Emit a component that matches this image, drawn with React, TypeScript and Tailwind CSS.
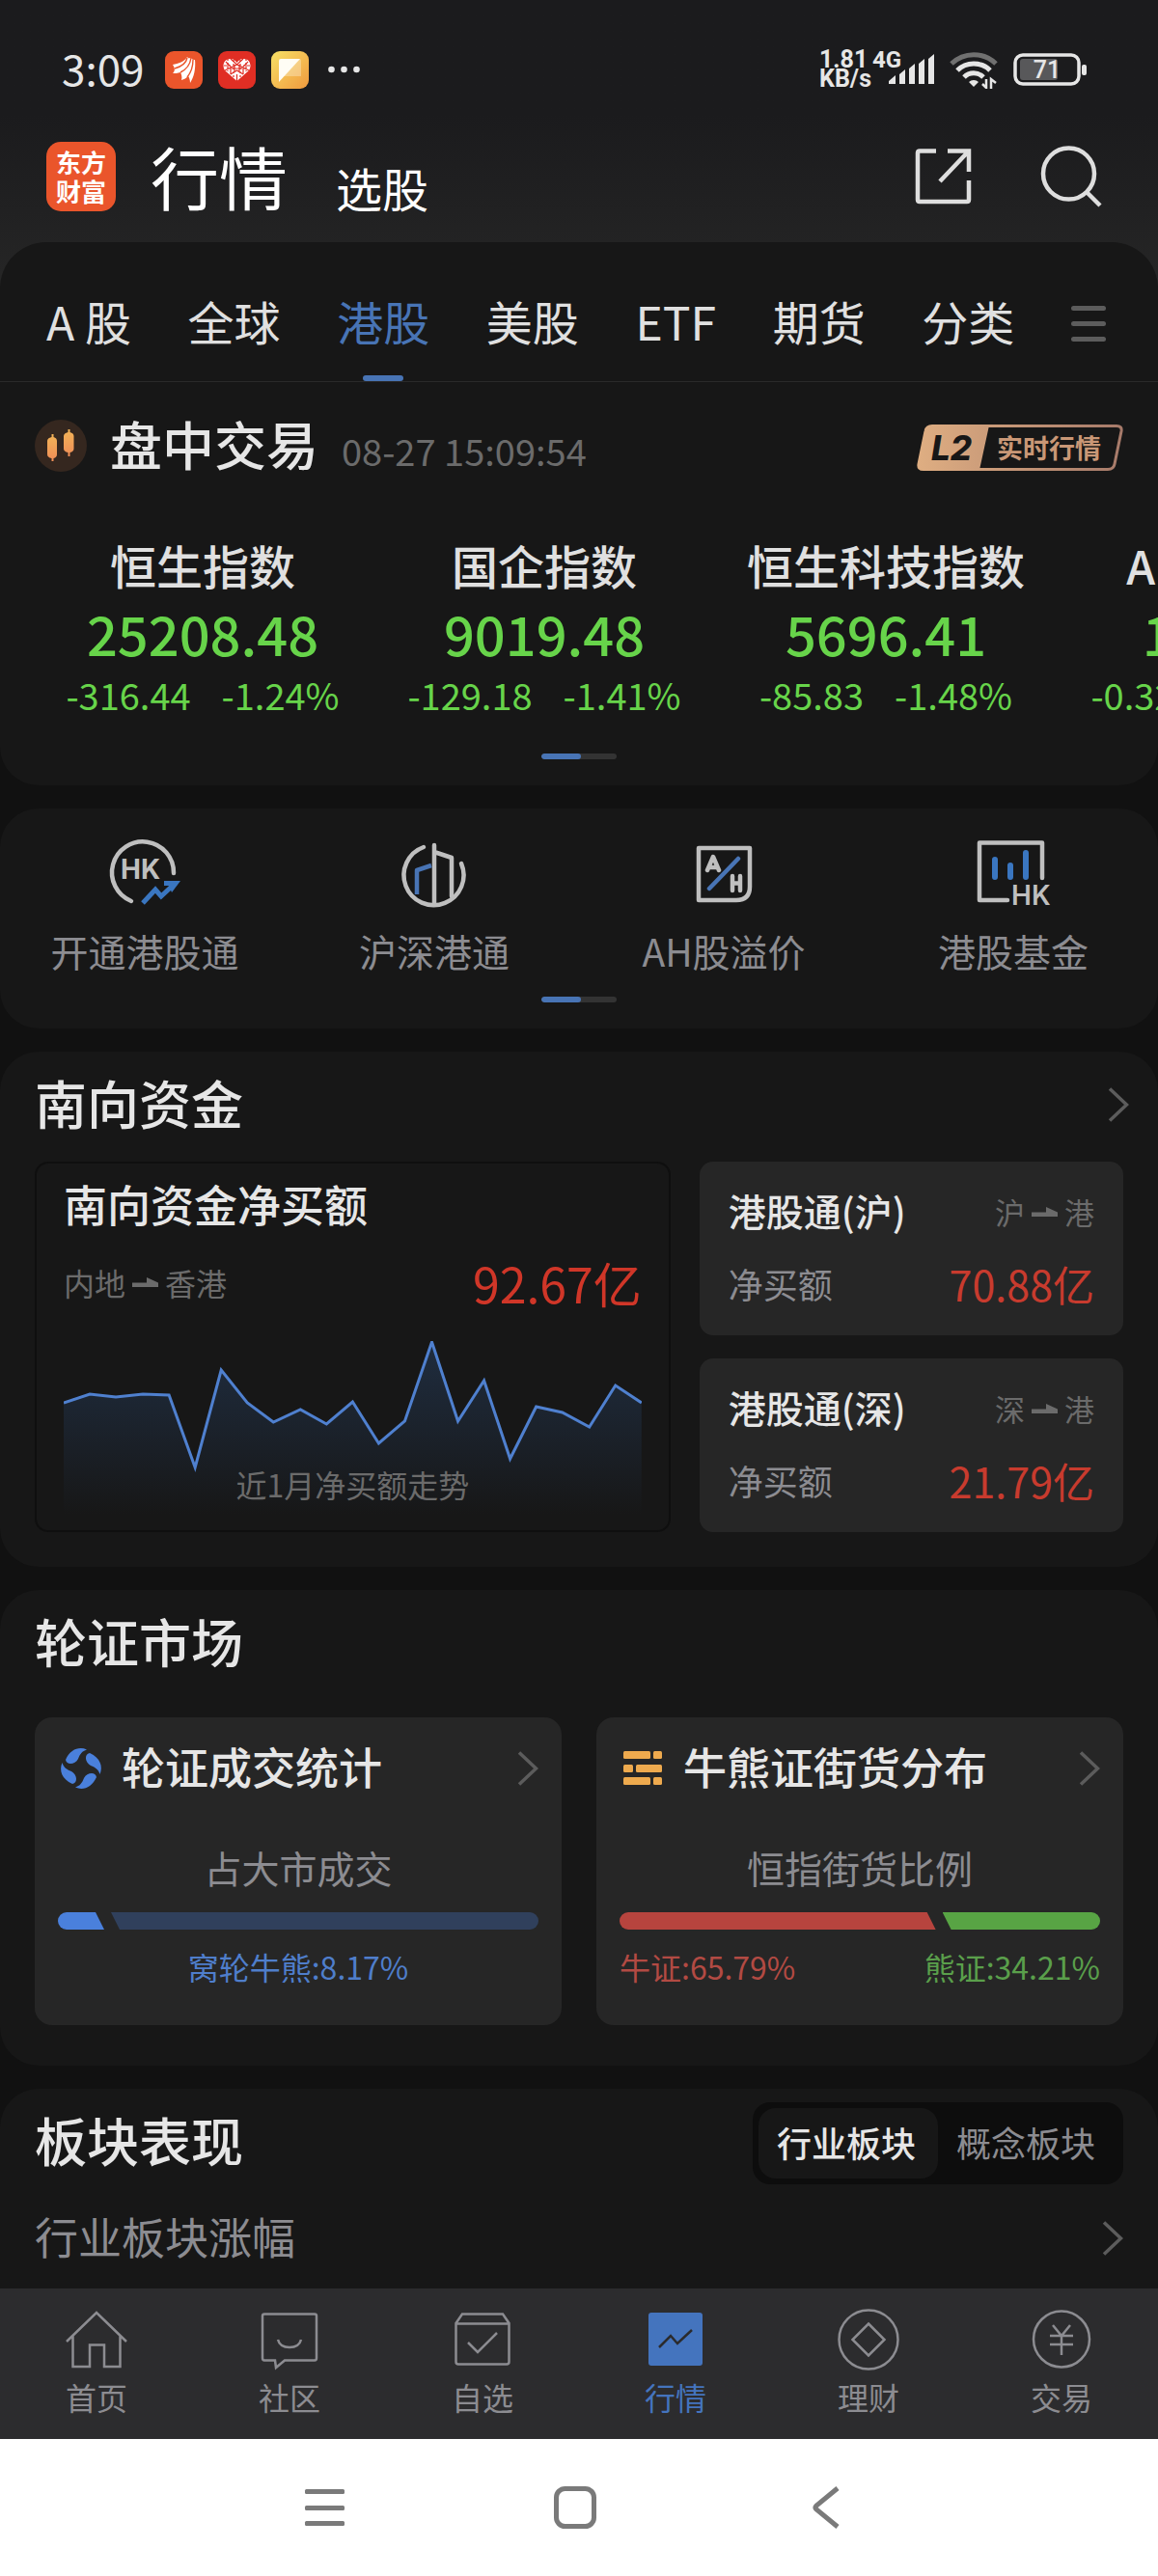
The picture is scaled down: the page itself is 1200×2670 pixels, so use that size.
import React from "react";
import clsx from "clsx";

const tabs = ["A 股", "全球", "港股", "美股", "ETF", "期货", "分类"];

const indices = [
  { name: "恒生指数", value: "25208.48", change: "-316.44", rate: "-1.24%" },
  { name: "国企指数", value: "9019.48", change: "-129.18", rate: "-1.41%" },
  { name: "恒生科技指数", value: "5696.41", change: "-85.83", rate: "-1.48%" },
  { name: "AH股溢价", value: "121.57", change: "-0.3229", rate: "-0.26%" },
];

// daily net inflow of the last month, measured down from the chart top
const trend = [
  64, 55, 58, 55, 56, 131, 30, 64, 84, 71, 86, 63, 106, 83, 1, 83, 41, 122, 68,
  74, 89, 46, 64,
];

const channels = [
  { name: "港股通(沪)", from: "沪", value: "70.88亿" },
  { name: "港股通(深)", from: "深", value: "21.79亿" },
];

function Chevron() {
  return (
    <svg className="w-[22px] h-9 shrink-0" viewBox="0 0 22 36" fill="none" stroke="#5c5c5c" strokeWidth="3.5">
      <path d="M2 1.5 L19.5 18 L2 34.5" />
    </svg>
  );
}

function FlowArrow() {
  return (
    <svg className="w-[27px] h-[10px] shrink-0" viewBox="0 0 27 10" fill="#6b6b6b">
      <path d="M0 5.5 H15 V0 L27 5.5 V10 H0 Z" />
    </svg>
  );
}

function Pager() {
  return (
    <div className="mx-auto w-[78px] h-[6px] rounded-full bg-[#333333] overflow-hidden">
      <div className="w-[41px] h-full rounded-full bg-[#4874b5]" />
    </div>
  );
}

function StatusBar() {
  return (
    <div className="flex items-center justify-between pt-11 pl-16 pr-[72px] text-[#e6e6e6]">
      <div className="flex items-center gap-4 h-14">
        <span className="pb-1 text-[44px] leading-[56px] w-[91px]">3:09</span>
        <svg className="size-[39px]" viewBox="0 0 39 39">
          <rect width="39" height="39" rx="9" fill="#ea552b" />
          <path
            d="M8 14 C14 13 20 11 23 6 C24 8 26 7 27 7 C28 9 30 9 31 9 C32 18 30 27 26 33 C26 30 25 27 24 26 C22 28 20 29 17 30 C18 27 17 24 16 22 C13 23 10 23 8 23 C11 20 10 17 8 14 Z"
            fill="#fff"
          />
          <path d="M27 7 C26 14 22 19 16 22 M29 9 C29 17 27 22 23 27 M23 7 C22 12 17 16 10 18" stroke="#ea552b" strokeWidth="1.4" fill="none" />
        </svg>
        <svg className="size-[39px]" viewBox="0 0 39 39">
          <rect width="39" height="39" rx="9" fill="#e02e24" />
          <path d="M19.5 31 L7 20 C3 13 8 7 13 8 C16 8 18 10 19.5 12 C21 10 23 8 26 8 C31 7 36 13 32 20 Z" fill="#fff" />
          <g stroke="#e02e24" strokeWidth="1.2" fill="none">
            <path d="M13 8 L19.5 14 L26 8 M7 20 L19.5 14 L32 20 M8 11 L13 16 V24 M31 11 L26 16 V24 M19.5 31 V24 M13 24 L19.5 20 L26 24 M6 15 H13 M26 15 H33 M17 14 V22 M22 14 V22 M14 18 H25" />
            <path d="M10 8 L10 21 M29 8 V21 M16 9 V28 M23 9 V28" strokeDasharray="2 2" />
          </g>
        </svg>
        <svg className="size-[39px]" viewBox="0 0 39 39">
          <defs>
            <linearGradient id="note" x1="0" y1="0" x2="1" y2="1">
              <stop offset="0" stopColor="#f7e066" />
              <stop offset="1" stopColor="#f09a3e" />
            </linearGradient>
          </defs>
          <rect width="39" height="39" rx="9" fill="url(#note)" />
          <path d="M10 8 H29 Q31 8 31 10 V26 H13 Z" fill="#fff" opacity=".3" />
          <path d="M8 10 Q8 8 10 8 H30 L8 32 Z" fill="#fffdf5" />
        </svg>
        <svg className="w-[34px] h-2 ml-1" viewBox="0 0 34 8" fill="#e6e6e6">
          <circle cx="3.5" cy="4" r="3.3" />
          <circle cx="16.5" cy="4" r="3.3" />
          <circle cx="29.5" cy="4" r="3.3" />
        </svg>
      </div>

      <div className="flex items-center gap-3">
        <div className="flex items-start font-bold text-[25px] leading-[20px] font-['Roboto','Noto_Sans_CJK_SC',sans-serif]">
          <div className="w-[55px]">
            1.81
            <br />
            KB/s
          </div>
          <svg className="w-[68px] h-[39px]" viewBox="0 0 68 39" fill="#e6e6e6">
            <text x="0" y="18" fontSize="24">4G</text>
            <path d="M17 32 L24 26 V35 H17 Z M28 25 L34 20 V35 H28 Z M38 19 L44 14 V35 H38 Z M48 14 L54 9 V35 H48 Z M58 9 L64 4 V35 H58 Z" />
          </svg>
        </div>
        <svg className="w-[50px] h-[39px]" viewBox="0 0 50 39" fill="none" strokeWidth="5">
          <path d="M2 13 A33 33 0 0 1 48 13" stroke="#707070" />
          <path d="M8 20 A24 24 0 0 1 42 20" stroke="#e6e6e6" />
          <path d="M15 27 A14 14 0 0 1 35 27" stroke="#e6e6e6" />
          <path d="M25 37 L20 32 A7 7 0 0 1 30 32 Z" fill="#e6e6e6" />
          <path d="M38 29 V38 L34 34 M43 39 V29 L48 33" stroke="#e6e6e6" strokeWidth="2.5" />
        </svg>
        <svg className="w-[78px] h-[34px] ml-1" viewBox="0 0 78 34">
          <rect x="2" y="2" width="66" height="30" rx="8" fill="none" stroke="#e6e6e6" strokeWidth="3.5" />
          <rect x="7" y="6" width="39" height="22" rx="3" fill="#58585a" />
          <rect x="71" y="12" width="5" height="11" rx="2" fill="#e6e6e6" />
          <text x="35" y="26" textAnchor="middle" fontSize="25" fontWeight="500" fill="#e6e6e6" className="font-['Roboto',sans-serif]">
            71
          </text>
        </svg>
      </div>
    </div>
  );
}

function Header() {
  return (
    <header className="flex items-center pt-[35px] pb-5 pl-12 pr-[58px] text-white">
      <div className="size-[72px] rounded-[15px] bg-[#ea552b] flex items-center justify-center text-center font-bold text-[26px] leading-[30px]">
        <span>
          东方
          <br />
          财富
        </span>
      </div>
      <h1 className="ml-9 pb-1 text-[71px] leading-[92px]">行情</h1>
      <button className="ml-[50px] mt-[22px] text-[48px] leading-[64px]">选股</button>
      <div className="ml-auto flex items-center gap-[70px]">
        <button aria-label="分享">
          <svg className="size-[60px]" viewBox="0 0 60 60" fill="none" stroke="#dedede" strokeWidth="4.5">
            <path d="M22 3.500 H5 Q3 3.500 3 5.500 V54 Q3 56 5 56 H54 Q56 56 56 54 V34" />
            <path d="M34 3.500 H56 V25 M55 4.500 L26 35" />
          </svg>
        </button>
        <button aria-label="搜索">
          <svg className="size-[64px]" viewBox="0 0 64 64" fill="none" stroke="#dedede" strokeWidth="4.5">
            <circle cx="29.500" cy="29" r="26.500" />
            <path d="M48 48 L62 62" />
          </svg>
        </button>
      </div>
    </header>
  );
}

function Tabs() {
  return (
    <nav className="flex justify-between items-start pt-[45px] pl-12 pr-[54px] border-b border-[#2a2a2a] text-[48px] text-[#e0e0e0]">
      {tabs.map((tab) => (
        <button key={tab} className={clsx("flex flex-col items-center", tab === "港股" && "text-[#4874b5]")}>
          <span className="leading-[72px] mb-[21px]">{tab}</span>
          <span className={clsx("w-[42px] h-[6px] rounded-full", tab === "港股" && "bg-[#4874b5]")} />
        </button>
      ))}
      <button aria-label="菜单" className="flex flex-col gap-[11px] pt-[21px]">
        <span className="w-9 h-[5px] rounded-full bg-[#5c5c5c]" />
        <span className="w-9 h-[5px] rounded-full bg-[#5c5c5c]" />
        <span className="w-9 h-[5px] rounded-full bg-[#5c5c5c]" />
      </button>
    </nav>
  );
}

function IndexPanel() {
  return (
    <section className="rounded-t-[48px] rounded-b-[40px] bg-[#171717] pb-[27px] overflow-hidden">
      <Tabs />
      <div className="flex items-center px-9 pt-7">
        <svg className="size-[54px] mt-1" viewBox="0 0 54 54">
          <defs>
            <linearGradient id="candle" x1="0" y1="0" x2="0" y2="1">
              <stop offset="0" stopColor="#f2b457" />
              <stop offset="1" stopColor="#ef8d57" />
            </linearGradient>
          </defs>
          <circle cx="27" cy="27" r="27" fill="#35271f" />
          <path d="M17.500 15 H19.500 V18 Q23 19 23 22 V36 Q23 39 19.500 40 V43 H17.500 V40 Q13 39 13 36 V22 Q13 19 17.500 18 Z" fill="url(#candle)" />
          <path d="M34.500 10 H36.500 V13 Q40.500 14 40.500 17 V30 Q40.500 33 36.500 34 V38 H34.500 V34 Q30 33 30 30 V17 Q30 14 34.500 13 Z" fill="url(#candle)" />
        </svg>
        <div className="flex items-baseline gap-6 ml-6">
          <h2 className="text-[54px] leading-[72px] font-medium text-[#e6e6e6]">盘中交易</h2>
          <span className="text-[38px] leading-[48px] text-[#6b6b6b]">08-27 15:09:54</span>
        </div>
        <button className="relative ml-auto mt-2 w-[214px] h-12 flex items-center">
          <svg className="absolute inset-0 size-full" viewBox="0 0 214 48">
            <defs>
              <linearGradient id="gold" gradientUnits="userSpaceOnUse" x1="0" y1="0" x2="214" y2="0">
                <stop offset="0" stopColor="#dfae82" />
                <stop offset="1" stopColor="#a67a6a" />
              </linearGradient>
            </defs>
            <path d="M16 1.500 H207 Q213 1.500 212 7 L205 41 Q204 46.500 198 46.500 H7 Q1 46.500 2 41 L9 7 Q10 1.500 16 1.500 Z" fill="none" stroke="url(#gold)" strokeWidth="3" />
            <path d="M16 1 H75 L65 47 H7 Q1 47 2 41 L9 7 Q10 1 16 1 Z" fill="url(#gold)" />
          </svg>
          <span className="relative w-[72px] text-center italic font-extrabold text-[35px] leading-[40px] text-[#171717] font-['Inter','Noto_Sans_CJK_SC',sans-serif]">
            L2
          </span>
          <span className="relative ml-[11px] text-[27px] leading-[40px] font-bold text-[#c99776]">实时行情</span>
        </button>
      </div>

      <div className="flex pl-[33px] pt-[61px]">
        {indices.map((item) => (
          <button key={item.name} className="w-[354px] shrink-0 flex flex-col items-center whitespace-nowrap">
            <span className="text-[48px] leading-[56px] font-medium text-[#e0e0e0]">{item.name}</span>
            <span className="mt-[11px] text-[56px] leading-[64px] font-medium text-[#67d44a]">{item.value}</span>
            <span className="mt-2 flex gap-8 text-[38px] leading-[48px] text-[#67d44a]">
              <span>{item.change}</span>
              <span>{item.rate}</span>
            </span>
          </button>
        ))}
      </div>
      <div className="pt-[37px]">
        <Pager />
      </div>
    </section>
  );
}

const featureIcons = [
  <>
    <path d="M20 63 A32 32 0 1 1 64 34" />
    <text x="9" y="40" fontSize="28" fontWeight="700" fill="#bfbfbf" stroke="none">HK</text>
    <path d="M32 65 L45 51 L51 58 L66 44" stroke="#3a76c0" strokeLinecap="butt" strokeLinejoin="miter" strokeWidth="5" />
    <path d="M54 42 H71 L62 54 L59 47 H54 Z" fill="#3a76c0" stroke="none" />
  </>,
  <>
    <path d="M23 7 A31 31 0 1 0 62 24" />
    <path d="M34 5 V65 M34 12 L52 18 V58" />
    <path d="M31 26 L16 31 V56" stroke="#4874b5" strokeLinecap="butt" />
  </>,
  <>
    <path d="M8 8 H61 V48 Q61 62 47 62 H8 Z" />
    <path d="M17 31 L23 17 L29 31 M19 28 H27 M43 37 V52 M51 37 V52 M43 44.500 H51" />
    <path d="M19 50 L49 19" stroke="#4874b5" />
  </>,
  <>
    <path d="M64 39 V2.500 H-1 V62 H28" />
    <path d="M15 20 V38 M31 26 V38 M47 13 V38" stroke="#3a76c0" strokeWidth="6" />
    <text x="32" y="67" fontSize="28" fontWeight="600" fill="#bfbfbf" stroke="none">HK</text>
  </>,
];

function Features() {
  return (
    <section className="rounded-[40px] bg-[#171717] pt-[33px] pb-[27px]">
      <div className="grid grid-cols-4">
        {["开通港股通", "沪深港通", "AH股溢价", "港股基金"].map((label, i) => (
          <button key={label} className="flex flex-col items-center">
            <svg
              className="size-[68px] overflow-visible font-['Inter',sans-serif]"
              viewBox="0 0 68 68"
              fill="none"
              stroke="#bfbfbf"
              strokeWidth="4.500"
              strokeLinecap="round"
              strokeLinejoin="round"
            >
              {featureIcons[i]}
            </svg>
            <span className="mt-[22px] text-[39px] leading-[48px] text-[#8c8c91]">{label}</span>
          </button>
        ))}
      </div>
      <div className="pt-6">
        <Pager />
      </div>
    </section>
  );
}

function TrendChart() {
  const step = 598 / (trend.length - 1);
  const line = trend.map((y, i) => `${Math.round(i * step)},${y}`).join(" ");
  return (
    <svg className="col-start-1 row-start-1 w-full h-[180px]" viewBox="0 0 598 180" preserveAspectRatio="none">
      <defs>
        <linearGradient id="area" x1="0" y1="0" x2="0" y2="1">
          <stop offset="0" stopColor="#1f2d40" />
          <stop offset="1" stopColor="#171717" />
        </linearGradient>
      </defs>
      <polygon points={`0,180 ${line} 598,180`} fill="url(#area)" />
      <polyline points={line} fill="none" stroke="#4f80cf" strokeWidth="3" />
    </svg>
  );
}

function Southbound() {
  return (
    <section className="rounded-[40px] bg-[#171717] pt-[17px] pb-9 px-9">
      <div className="flex items-center justify-between -mr-[6px]">
        <h2 className="text-[54px] leading-[72px] font-medium text-[#e6e6e6]">南向资金</h2>
        <button aria-label="南向资金详情" className="pt-1">
          <Chevron />
        </button>
      </div>
      <div className="mt-[25px] grid grid-cols-[3fr_2fr] gap-[30px]">
        <div className="rounded-[14px] border-2 border-[#0f0f0f] px-7 pt-[14px] pb-4">
          <h3 className="text-[45px] leading-[56px] font-medium text-[#e6e6e6]">南向资金净买额</h3>
          <div className="mt-[25px] flex items-center justify-between">
            <span className="flex items-center gap-[7px] text-[32px] leading-[40px] text-[#6b6b6b]">
              内地 <FlowArrow /> 香港
            </span>
            <span className="text-[50px] leading-[56px] text-[#d03628]">92.67亿</span>
          </div>
          <div className="mt-[33px] grid">
            <TrendChart />
            <span className="col-start-1 row-start-1 self-end mx-auto pb-3 text-[32px] leading-[40px] text-[#6b6b6b]">
              近1月净买额走势
            </span>
          </div>
        </div>
        <div className="flex flex-col justify-between gap-6">
          {channels.map((c) => (
            <div key={c.name} className="flex-1 rounded-[14px] bg-[#262626] px-[30px] pt-[26px] pb-[30px]">
              <div className="flex items-center justify-between">
                <h3 className="text-[39px] leading-[48px] font-medium text-[#e6e6e6]">{c.name}</h3>
                <span className="flex items-center gap-[7px] pt-1 text-[31px] leading-[40px] text-[#6b6b6b]">
                  {c.from} <FlowArrow /> 港
                </span>
              </div>
              <div className="mt-7 flex items-center justify-between leading-[48px]">
                <span className="text-[36px] text-[#8c8c91]">净买额</span>
                <span className="text-[43px] text-[#c83b2e]">{c.value}</span>
              </div>
            </div>
          ))}
        </div>
      </div>
    </section>
  );
}

type RatioBarProps = { percent: number; left: string; right: string };

function RatioBar({ percent, left, right }: RatioBarProps) {
  return (
    <div className="mt-[23px] flex gap-[7px] h-[18px]">
      <div
        className={clsx("min-w-12 rounded-l-full [clip-path:polygon(0_0,calc(100%-9px)_0,100%_100%,0_100%)]", left)}
        style={{ width: `${percent}%` }}
      />
      <div className={clsx("flex-1 rounded-r-full [clip-path:polygon(0_0,100%_0,100%_100%,9px_100%)]", right)} />
    </div>
  );
}

function Warrants() {
  return (
    <section className="rounded-[40px] bg-[#171717] pt-[17px] pb-[42px] px-9">
      <h2 className="text-[54px] leading-[72px] font-medium text-[#e6e6e6]">轮证市场</h2>
      <div className="mt-[43px] grid grid-cols-2 gap-9">
        <div className="rounded-[18px] bg-[#262626] px-6 pt-[23px] pb-[38px]">
          <div className="flex items-center">
            <svg className="size-12 mt-1" viewBox="0 0 48 48" fill="#4a80dc">
              {[0, 90, 180, 270].map((deg) => (
                <path
                  key={deg}
                  transform={`rotate(${deg} 24 24)`}
                  d="M8 15 C13 4 22 1 30 4.500 C25 6 23 9 21 14 C18 20 9 21 8 15 Z"
                />
              ))}
            </svg>
            <h3 className="ml-[18px] text-[45px] leading-[56px] font-medium text-[#e6e6e6]">轮证成交统计</h3>
            <button aria-label="轮证成交统计详情" className="ml-auto pt-1">
              <Chevron />
            </button>
          </div>
          <p className="mt-[52px] text-center text-[39px] leading-[48px] text-[#8c8c91]">占大市成交</p>
          <RatioBar percent={8.17} left="bg-[#4a80dc]" right="bg-[#30405c]" />
          <p className="mt-[18px] pb-[3px] text-center text-[32px] leading-[40px] text-[#4f7ecb]">窝轮牛熊:8.17%</p>
        </div>
        <div className="rounded-[18px] bg-[#262626] px-6 pt-[23px] pb-[38px]">
          <div className="flex items-center">
            <svg className="size-12 mt-1" viewBox="0 0 48 48" fill="#eeaa4e">
              <rect x="4" y="6" width="28" height="8" rx="1.500" />
              <rect x="35" y="6" width="9" height="8" rx="1.500" />
              <rect x="4" y="20" width="10" height="8" rx="1.500" />
              <rect x="17" y="20" width="27" height="8" rx="1.500" />
              <rect x="4" y="33" width="28" height="8" rx="1.500" />
              <rect x="35" y="33" width="9" height="8" rx="1.500" />
            </svg>
            <h3 className="ml-[18px] text-[45px] leading-[56px] font-medium text-[#e6e6e6]">牛熊证街货分布</h3>
            <button aria-label="牛熊证街货分布详情" className="ml-auto pt-1">
              <Chevron />
            </button>
          </div>
          <p className="mt-[52px] text-center text-[39px] leading-[48px] text-[#8c8c91]">恒指街货比例</p>
          <RatioBar percent={65.79} left="bg-[#b7443e]" right="bg-[#58a444]" />
          <p className="mt-[18px] pb-[3px] flex justify-between text-[32px] leading-[40px]">
            <span className="text-[#b24a43]">牛证:65.79%</span>
            <span className="text-[#5a9f4b]">熊证:34.21%</span>
          </p>
        </div>
      </div>
    </section>
  );
}

function Sectors() {
  return (
    <section className="rounded-t-[40px] bg-[#171717] pt-[14px] pb-[26px] px-9">
      <div className="flex items-center justify-between">
        <h2 className="text-[54px] leading-[72px] font-medium text-[#e6e6e6] pb-2">板块表现</h2>
        <div className="flex rounded-[18px] bg-[#0d0d0d] p-[6px] text-[36px] leading-[70px]">
          <button className="rounded-[18px] bg-[#171717] w-[186px] h-[73px] pr-1 pb-[3px] font-medium text-[#e6e6e6]">行业板块</button>
          <button className="w-[186px] h-[73px] pr-1 pb-[3px] text-[#8c8c91]">概念板块</button>
        </div>
      </div>
      <div className="mt-[26px] flex items-center justify-between">
        <span className="text-[45px] leading-[56px] text-[#8c8c91]">行业板块涨幅</span>
        <button aria-label="行业板块涨幅详情" className="pt-1">
          <Chevron />
        </button>
      </div>
    </section>
  );
}

const navItems = [
  {
    label: "首页",
    icon: <path d="M1 34 L32 4 L63 34 M7.500 28 V60 H25 V37.500 H40 V60 H56.500 V28" />,
  },
  {
    label: "社区",
    icon: (
      <>
        <path d="M6 5.500 H58 Q60 5.500 60 7.500 V51 Q60 53.500 58 53.500 H27 L18 61 L17 53.500 H6 Q4 53.500 4 51 V7.500 Q4 5.500 6 5.500 Z" />
        <path d="M20 32 Q22 40 32 40 Q42 40 44 32" />
      </>
    ),
  },
  {
    label: "自选",
    icon: (
      <>
        <path d="M4.500 15 L11 5.500 H53 L59.500 15 V55 Q59.500 57.500 57 57.500 H7 Q4.500 57.500 4.500 55 Z M4.500 15.500 H59.500" />
        <path d="M17 35 L27 45 L47 25" />
      </>
    ),
  },
  {
    label: "行情",
    icon: (
      <>
        <rect x="4" y="4" width="56" height="55" rx="3" fill="#4474be" stroke="none" />
        <path d="M15 40 L27 28 L34 36 L49 22" stroke="#2b2b2d" />
      </>
    ),
  },
  {
    label: "理财",
    icon: (
      <>
        <circle cx="32" cy="32" r="30.500" />
        <path d="M32 15.500 L48.500 32 L32 48.500 L15.500 32 Z" />
      </>
    ),
  },
  {
    label: "交易",
    icon: (
      <>
        <circle cx="32" cy="31.500" r="29" />
        <path d="M23 17 L32 28 L41 17 M32 28 V48 M20 28 H44 M20 37 H44" />
      </>
    ),
  },
];

function BottomNav() {
  return (
    <nav className="grid grid-cols-6 bg-[#2c2c2e] pt-[21px] pb-6">
      {navItems.map(({ label, icon }) => (
        <a
          key={label}
          href="#"
          className={clsx("flex flex-col items-center", label === "行情" ? "text-[#4474be]" : "text-[#8c8c91]")}
        >
          <svg className="size-16" viewBox="0 0 64 64" fill="none" stroke="currentColor" strokeWidth="2.500">
            {icon}
          </svg>
          <span className="mt-[7px] text-[32px] leading-[40px]">{label}</span>
        </a>
      ))}
    </nav>
  );
}

function SystemNav() {
  return (
    <div className="flex justify-center gap-[216px] bg-white py-[49px] pr-2">
      <button aria-label="最近任务">
        <svg className="size-11" viewBox="0 0 44 44" fill="#7a7a7a">
          <rect x="2" y="3" width="41" height="5" rx="1.500" />
          <rect x="2" y="20" width="41" height="5" rx="1.500" />
          <rect x="2" y="36" width="41" height="5" rx="1.500" />
        </svg>
      </button>
      <button aria-label="主屏幕">
        <svg className="size-11" viewBox="0 0 44 44" fill="none" stroke="#7a7a7a" strokeWidth="5">
          <rect x="2.500" y="2.500" width="39" height="39" rx="9" />
        </svg>
      </button>
      <button aria-label="返回">
        <svg className="size-11" viewBox="0 0 44 44" fill="none" stroke="#7a7a7a" strokeWidth="5">
          <path d="M34 2 L12 20 Q10 22 12 24 L34 42" />
        </svg>
      </button>
    </div>
  );
}

export default function App() {
  return (
    <div className="bg-[#111111] font-['Noto_Sans_CJK_SC',sans-serif]">
      <div className="bg-linear-to-b from-[#1b1b1d] from-40% to-[#262626] to-100% -mb-12 pb-12">
        <StatusBar />
        <Header />
      </div>
      <main className="relative flex flex-col gap-6">
        <IndexPanel />
        <Features />
        <Southbound />
        <Warrants />
        <Sectors />
      </main>
      <BottomNav />
      <SystemNav />
    </div>
  );
}
